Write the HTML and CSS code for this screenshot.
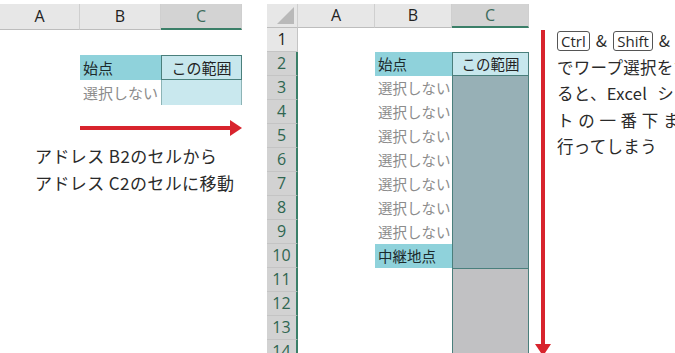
FILE: index.html
```html
<!doctype html>
<html>
<head>
  <meta charset="utf-8">
  <title>ワープ選択</title>
  <link rel="stylesheet" href="styles.css">
</head>
<body>
  <div class="page">
    <div class="left">
      <div class="sheet-l">
        <div class="hd">A</div>
        <div class="hd">B</div>
        <div class="hd sel-col">C</div>
        <div></div><div></div><div></div>
        <div></div>
        <div class="cell teal">始点</div>
        <div class="cell range">この範囲</div>
        <div></div>
        <div class="cell gray-txt">選択しない</div>
        <div class="cell pale"></div>
      </div>
      <div class="arrow-h"></div>
      <p class="caption">アドレス B2のセルから<br>アドレス C2のセルに移動</p>
    </div>

    <div class="sheet-r">
      <div class="hd corner"><span class="tri"></span></div>
      <div class="hd">A</div>
      <div class="hd">B</div>
      <div class="hd sel-col">C</div>

      <div class="rn">1</div><div></div><div></div><div></div>
      <div class="rn sel-row">2</div><div></div><div class="cell teal">始点</div><div class="cell range">この範囲</div>
      <div class="rn sel-row">3</div><div></div><div class="cell gray-txt">選択しない</div><div class="cell dark"></div>
      <div class="rn sel-row">4</div><div></div><div class="cell gray-txt">選択しない</div><div class="cell dark"></div>
      <div class="rn sel-row">5</div><div></div><div class="cell gray-txt">選択しない</div><div class="cell dark"></div>
      <div class="rn sel-row">6</div><div></div><div class="cell gray-txt">選択しない</div><div class="cell dark"></div>
      <div class="rn sel-row">7</div><div></div><div class="cell gray-txt">選択しない</div><div class="cell dark"></div>
      <div class="rn sel-row">8</div><div></div><div class="cell gray-txt">選択しない</div><div class="cell dark"></div>
      <div class="rn sel-row">9</div><div></div><div class="cell gray-txt">選択しない</div><div class="cell dark"></div>
      <div class="rn sel-row">10</div><div></div><div class="cell teal">中継地点</div><div class="cell dark"></div>
      <div class="rn sel-row">11</div><div></div><div></div><div class="cell grey top-line"></div>
      <div class="rn sel-row">12</div><div></div><div></div><div class="cell grey"></div>
      <div class="rn sel-row">13</div><div></div><div></div><div class="cell grey"></div>
      <div class="rn sel-row">14</div><div></div><div></div><div class="cell grey"></div>
    </div>

    <div class="down"><div class="arrow-v"></div></div>

    <div class="note">
      <div class="ln"><span class="key">Ctrl</span> &amp; <span class="key">Shift</span> &amp; <span class="key">↓</span></div>
      <div class="ln">でワープ選択をす</div>
      <div class="ln wide-sp">ると、Excel シー</div>
      <div class="ln spread">トの一番下まで</div>
      <div class="ln">行ってしまう</div>
    </div>
  </div>
</body>
</html>
```

FILE: styles.css
```css
body{
  margin: 0;
  background: #fff;
  font-family: "Noto Sans CJK JP", "Noto Sans", sans-serif;
  color: #222;
}
.page{
  display: flex;
  width: 675px;
  height: 353px;
  overflow: hidden;
}

/* left, small sheet */
.left{
  width: 267px;
  flex: none;
}
.sheet-l{
  display: grid;
  grid-template-columns: 80px 81px 81px;
  grid-template-rows: 26px 25px 25px 25px;
  margin-top: 4px;
  width: 242px;
}
.hd{
  background: #e7e7e7;
  border-right: 1px solid #cfcfcf;
  border-bottom: 1px solid #bdbdbd;
  font-family: "Open Sans", "Liberation Sans", sans-serif;
  font-size: 16px;
  line-height: 24px;
  text-align: center;
  color: #222;
}
.sel-col{
  background: #d3d3d3;
  border-bottom: 2px solid #3b7f68;
  color: #3d6b5c;
}
.cell{
  font-size: 15px;
  line-height: 25px;
  padding: 0 3px;
  white-space: nowrap;
  overflow: hidden;
}
.teal{
  background: #8fd2db;
  color: #1c2a2c;
}
.range{
  background: #c7e7ed;
  border: 1px solid #4a7f7c;
  text-align: center;
  line-height: 22px;
}
.sheet-l .range{
  line-height: 23px;
}
.pale{
  background: #c9e8ee;
  border-left: 1px solid #8db4b6;
  border-right: 1px solid #8db4b6;
}
.gray-txt{
  color: #8c8c8c;
  text-align: right;
  padding-right: 4px;
}
.arrow-h{
  position: relative;
  margin: 21px 0 0 80px;
  width: 152px;
  height: 4px;
  background: #d8242d;
}
.arrow-h::after{
  content: "";
  position: absolute;
  left: 150px;
  top: -6px;
  border-left: 12px solid #d8242d;
  border-top: 8px solid transparent;
  border-bottom: 8px solid transparent;
}
.caption{
  margin: 12px 0 0 35px;
  font-size: 17px;
  line-height: 27px;
  letter-spacing: 0.4px;
  color: #2a2a2a;
  white-space: nowrap;
}

/* right, tall sheet */
.sheet-r{
  display: grid;
  grid-template-columns: 31px 77px 77px 77px;
  grid-template-rows: 24px repeat(14, 24px);
  margin-top: 4px;
  flex: none;
  height: 349px;
  overflow: hidden;
}
.sheet-r .hd{
  line-height: 22px;
}
.corner{
  position: relative;
}
.tri{
  position: absolute;
  right: 3px;
  bottom: 3px;
  border-left: 17px solid transparent;
  border-bottom: 17px solid #b9b9b9;
}
.rn{
  background: #e7e7e7;
  border-bottom: 1px solid #c4c4c4;
  border-right: 1px solid #c4c4c4;
  font-family: "Open Sans", "Liberation Sans", sans-serif;
  font-size: 16px;
  line-height: 23px;
  text-align: center;
  color: #222;
}
.sel-row{
  background: #d2d2d2;
  border-right: 2px solid #3b7f68;
  color: #2f6650;
}
.sheet-r .cell{
  font-size: 14.5px;
  line-height: 24px;
}
.sheet-r .range{
  line-height: 22px;
}
.dark{
  background: #97b0b6;
  border-left: 1px solid #4a7f7c;
  border-right: 1px solid #4a7f7c;
}
.grey{
  background: #c1c1c3;
  border-left: 1px solid #4a7f7c;
  border-right: 1px solid #4a7f7c;
}
.top-line{
  border-top: 1px solid #4a7f7c;
}

/* down arrow */
.down{
  width: 28px;
  flex: none;
  display: flex;
  justify-content: center;
}
.arrow-v{
  position: relative;
  margin-top: 30px;
  width: 4px;
  height: 316px;
  background: #d8242d;
}
.arrow-v::after{
  content: "";
  position: absolute;
  top: 314px;
  left: -6px;
  border-top: 12px solid #d8242d;
  border-left: 8px solid transparent;
  border-right: 8px solid transparent;
}

/* note text */
.note{
  flex: 1;
  padding-top: 27px;
  overflow: hidden;
  font-size: 16.5px;
  color: #2a2a2a;
}
.ln{
  line-height: 26.5px;
  white-space: nowrap;
  letter-spacing: 0.3px;
}
.key{
  display: inline-block;
  margin: 0 2px;
  border: 1px solid #555;
  border-radius: 3px;
  padding: 0 3px;
  font-family: "Open Sans", "Liberation Sans", sans-serif;
  font-size: 15px;
  line-height: 18px;
  letter-spacing: 0;
}
.key:first-child{
  margin-left: 0;
}
.wide-sp{
  word-spacing: 6px;
}
.spread{
  letter-spacing: 4.7px;
}
```
